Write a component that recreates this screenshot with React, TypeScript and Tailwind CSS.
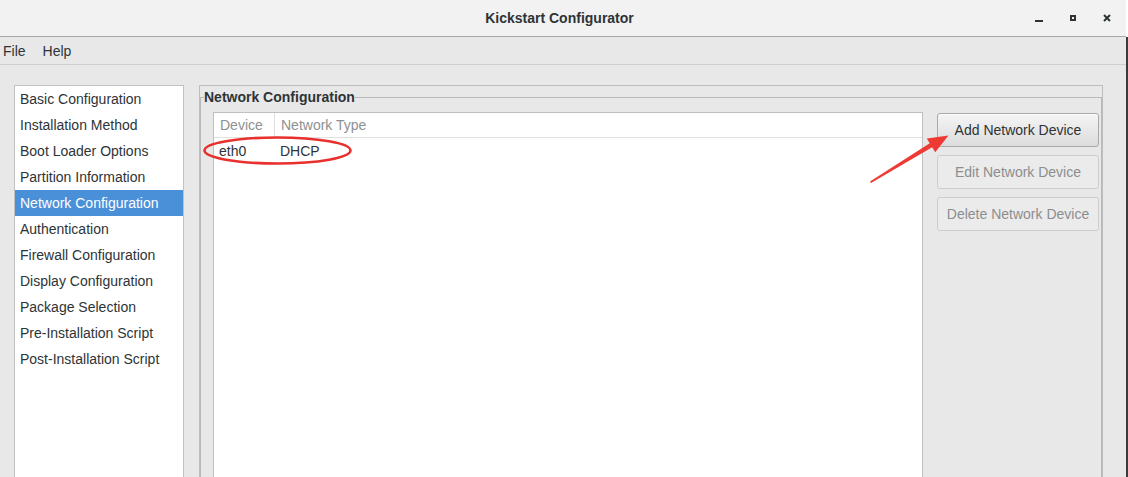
const sections = [
  'Basic Configuration',
  'Installation Method',
  'Boot Loader Options',
  'Partition Information',
  'Network Configuration',
  'Authentication',
  'Firewall Configuration',
  'Display Configuration',
  'Package Selection',
  'Pre-Installation Script',
  'Post-Installation Script',
];

function TitleBar() {
  return (
    <div className="grid h-[37px] grid-cols-[1fr_auto_1fr] items-center border-b border-[#a9a9a9] bg-[#f2f2f2]">
      <div />
      <div className="mr-[7px] font-bold">Kickstart Configurator</div>
      <div className="flex h-full justify-end pr-[2px]">
        <div className="flex w-[34px] items-center justify-center">
          <svg width="10" height="10" viewBox="0 0 10 10">
            <rect x="1" y="7" width="8" height="2" fill="#2e3436" />
          </svg>
        </div>
        <div className="flex w-[34px] items-center justify-center">
          <svg width="10" height="10" viewBox="0 0 10 10">
            <rect x="3" y="3" width="4" height="4" fill="none" stroke="#2e3436" strokeWidth="2" />
          </svg>
        </div>
        <div className="flex w-[34px] items-center justify-center">
          <svg width="10" height="10" viewBox="0 0 10 10">
            <path d="M2 2 L8 8 M8 2 L2 8" stroke="#2e3436" strokeWidth="2" />
          </svg>
        </div>
      </div>
    </div>
  );
}

function MenuBar() {
  return (
    <div className="flex h-[28px] items-center gap-[17px] border-b border-[#cfcfcf] pl-[3px] pt-[2px]">
      <span>File</span>
      <span>Help</span>
    </div>
  );
}

function Sidebar() {
  return (
    <div className="w-[170px] border border-[#c2c2c2] bg-white">
      {sections.map((s) => {
        const active = s === 'Network Configuration';
        return (
          <div
            key={s}
            className={
              active
                ? 'flex h-[26px] items-center bg-[#4a90d9] pl-[5px] text-white'
                : 'flex h-[26px] items-center pl-[5px]'
            }
          >
            {s}
          </div>
        );
      })}
    </div>
  );
}

function DeviceTable() {
  return (
    <div className="flex-1 border border-[#c0c0c0] bg-white">
      <div className="flex h-[25px] items-center border-b border-[#e2e2e2] text-[#8e9192]">
        <div className="flex h-full w-[61px] items-center border-r border-[#dedede] pl-[6px]">Device</div>
        <div className="pl-[6px]">Network Type</div>
      </div>
      <div className="flex h-[26px] items-center">
        <div className="w-[61px] pl-[5px]">eth0</div>
        <div className="pl-[5px]">DHCP</div>
      </div>
    </div>
  );
}

function Buttons() {
  return (
    <div className="mt-[1px] flex w-[162px] flex-col gap-[8px]">
      <button className="h-[34px] rounded-[3px] border border-[#a9a9a9] bg-gradient-to-b from-[#f5f5f5] to-[#dcdcdc] text-[#2e3436] shadow-[inset_0_1px_#ffffff]">
        Add Network Device
      </button>
      <button className="h-[34px] rounded-[3px] border border-[#cdcdcd] bg-[#ebebeb] text-[#8b8e8f]">
        Edit Network Device
      </button>
      <button className="h-[34px] rounded-[3px] border border-[#cdcdcd] bg-[#ebebeb] text-[#8b8e8f]">
        Delete Network Device
      </button>
    </div>
  );
}

function Annotations() {
  return (
    <svg className="pointer-events-none absolute left-0 top-0" width="1128" height="477">
      <ellipse cx="277.5" cy="150.5" rx="73" ry="13" fill="none" stroke="#e8302c" strokeWidth="2.6" />
      <polygon points="870,181.6 871,183 934.3,146.1 931.7,141.9" fill="#ee3a33" />
      <polygon points="948.5,135.5 935.2,152.2 926.8,138.6" fill="#ee3a33" />
    </svg>
  );
}

export default function App() {
  return (
    <div className="relative flex h-[477px] w-[1128px] overflow-hidden bg-white font-['Liberation_Sans',Arial,sans-serif] text-[14px] text-[#2e3436]">
      <div className="flex h-[520px] w-[1126px] flex-col bg-[#e8e8e8]">
        <TitleBar />
        <MenuBar />
        <div className="flex flex-1 pl-[14px] pr-[23px] pt-[20px]">
          <Sidebar />
          <div className="ml-[15px] flex flex-1 flex-col border border-[#bdbdbd] pt-[3px]">
            <fieldset className="flex flex-1 flex-col border border-[#b9b9b9]">
              <legend className="ml-[3px] leading-[16px] font-bold">Network Configuration</legend>
              <div className="flex flex-1 pl-[12px] pr-[2px] pt-[7px]">
                <DeviceTable />
                <div className="w-[14px]" />
                <Buttons />
              </div>
            </fieldset>
          </div>
        </div>
      </div>
      <div className="flex w-[2px] flex-col">
        <div className="h-[37px] bg-white" />
        <div className="flex-1 bg-[#3a3a3a]" />
      </div>
      <Annotations />
    </div>
  );
}
